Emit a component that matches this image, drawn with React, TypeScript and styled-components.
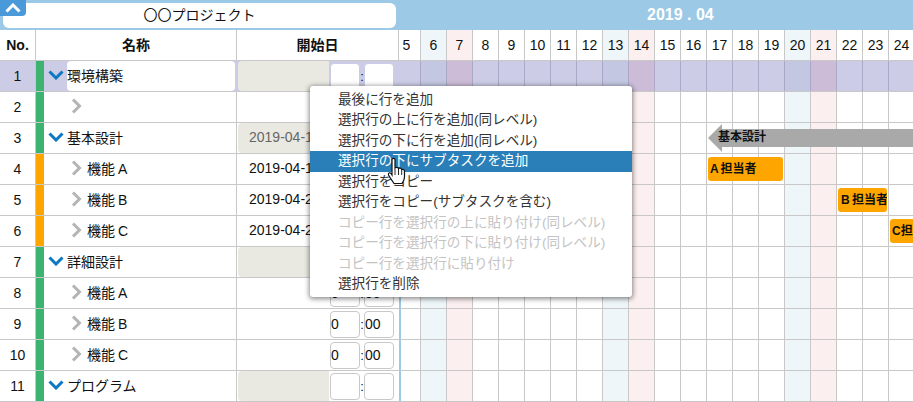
import React from "react";
import styled, { createGlobalStyle } from "styled-components";

const Global = createGlobalStyle`
  html, body { margin: 0; padding: 0; background: #fff; overflow: hidden; }
  body { font-family: "Liberation Sans", "Noto Sans CJK JP", sans-serif; font-size: 14px; color: #111; }
`;

const Page = styled.div`
  position: relative;
  width: 913px;
  height: 402px;
  overflow: hidden;
`;
const TopBar = styled.header`
  position: relative;
  display: flex;
  align-items: center;
  height: 30px;
  background: #9bc9e6;
`;
const CollapseButton = styled.button`
  position: absolute;
  left: 0;
  top: 0;
  display: flex;
  align-items: center;
  justify-content: center;
  width: 26px;
  height: 16px;
  padding: 0;
  border: 0;
  border-radius: 0 0 4px 0;
  background: #4a9ada;
`;
const ProjectName = styled.div`
  width: 393px;
  height: 25px;
  margin-left: 3px;
  border-radius: 6px;
  background: #fff;
  text-align: center;
  line-height: 25px;
  font-size: 14px;
`;
const MonthLabel = styled.div`
  margin-left: 251px;
  color: #fff;
  font-size: 16px;
  font-weight: bold;
  white-space: pre;
`;
const Row = styled.div<{ $selected?: boolean }>`
  display: flex;
  height: 30px;
  border-bottom: 1px solid #c8c8c8;
  background: ${(p) => (p.$selected ? "#cccce6" : "#fff")};
`;
const NoCell = styled.div<{ $head?: boolean }>`
  flex: none;
  display: flex;
  align-items: center;
  justify-content: center;
  width: 35px;
  border-right: 1px solid #c8c8c8;
  font-weight: ${(p) => (p.$head ? "bold" : "normal")};
`;
const NameHead = styled.div`
  flex: none;
  width: 200px;
  border-right: 1px solid #c8c8c8;
  text-align: center;
  line-height: 30px;
  font-weight: bold;
`;
const StartHead = styled.div`
  flex: none;
  width: 161px;
  margin-right: 2px;
  border-right: 1px solid #c8c8c8;
  text-align: center;
  line-height: 30px;
  font-weight: bold;
`;
const ColorBar = styled.div<{ $color: string }>`
  flex: none;
  width: 8px;
  background: ${(p) => p.$color};
`;
const NameCell = styled.div<{ $indent: number; $clear?: boolean }>`
  flex: none;
  display: flex;
  align-items: center;
  width: 193px;
  padding: 0 0 2px ${(p) => p.$indent}px;
  box-sizing: border-box;
  border-right: 1px solid ${(p) => (p.$clear ? "transparent" : "#c8c8c8")};
`;
const NameBox = styled.div`
  flex: 1;
  align-self: flex-start;
  height: 30px;
  margin: 0 1px 0 3px;
  border-radius: 4px;
  background: #fff;
  line-height: 30px;
`;
const Arrow = styled.svg`
  flex: none;
  display: block;
`;
const Label = styled.span<{ $gap: number }>`
  margin-left: ${(p) => p.$gap}px;
  white-space: pre;
  word-spacing: -1px;
`;
const DateCell = styled.div<{ $selected?: boolean }>`
  flex: none;
  display: flex;
  align-items: center;
  width: 164px;
  box-sizing: border-box;
  padding-left: 1px;
  border-right: 2px solid ${(p) => (p.$selected ? "transparent" : "#9bc9e6")};
`;
const DateBox = styled.div<{ $filled: boolean }>`
  flex: none;
  width: 91px;
  height: 100%;
  box-sizing: border-box;
  padding-left: 11px;
  border-radius: 4px 0 0 4px;
  background: ${(p) => (p.$filled ? "#e9e9e2" : "transparent")};
  color: ${(p) => (p.$filled ? "#666" : "#111")};
  line-height: 29px;
`;
const TimeGroup = styled.div`
  display: flex;
  margin-left: 1px;
`;
const TimeBox = styled.div<{ $selected?: boolean }>`
  flex: none;
  width: 30px;
  height: 27px;
  box-sizing: border-box;
  border: 1px solid ${(p) => (p.$selected ? "#cccce6" : "#c8c8c8")};
  border-radius: 4px;
  background: #fff;
  line-height: 25px;
  white-space: pre;
`;
const TimeSep = styled.span`
  flex: none;
  width: 4px;
  text-align: center;
  line-height: 27px;
  font-size: 13px;
`;
const Gantt = styled.div`
  position: relative;
  flex: none;
  display: flex;
  width: 512px;
  overflow: hidden;
`;
const DayCell = styled.div<{ $w: number; $pad: number; $bg: string; $line: string }>`
  position: relative;
  flex: none;
  width: ${(p) => p.$w}px;
  box-sizing: border-box;
  padding-right: ${(p) => p.$pad}px;
  border-right: 1px solid ${(p) => p.$line};
  background: ${(p) => p.$bg};
  text-align: center;
  line-height: 30px;
  font-size: 14px;
`;
const TaskBar = styled.div<{ $left: number; $width: number; $pad: number }>`
  position: absolute;
  z-index: 1;
  left: ${(p) => p.$left}px;
  top: 3px;
  width: ${(p) => p.$width}px;
  height: 24px;
  box-sizing: border-box;
  padding-left: ${(p) => p.$pad}px;
  border-radius: 3px;
  background: #ffa500;
  font-size: 12px;
  font-weight: bold;
  line-height: 24px;
  word-spacing: -1px;
  white-space: pre;
  overflow: hidden;
`;
const SummaryBar = styled.div`
  position: absolute;
  z-index: 1;
  left: 307px;
  top: 1px;
  display: flex;
  align-items: center;
  width: 230px;
  height: 28px;
`;
const SummaryBody = styled.div`
  flex: 1;
  height: 18px;
  margin-left: -5px;
  padding-left: 1px;
  background: #a9a9a9;
  font-size: 12px;
  font-weight: bold;
  line-height: 17px;
`;
const Menu = styled.div`
  position: absolute;
  z-index: 5;
  left: 310px;
  top: 86px;
  width: 322px;
  box-sizing: border-box;
  padding: 3.5px 0 2.5px;
  border-radius: 3px;
  background: #fff;
  box-shadow: 0 1px 5px 1px rgba(0, 0, 0, 0.45);
`;
const MenuItem = styled.div<{ $active?: boolean; $disabled?: boolean }>`
  height: 20.5px;
  padding-left: 28px;
  background: ${(p) => (p.$active ? "#2a7fb8" : "transparent")};
  color: ${(p) => (p.$active ? "#fff" : p.$disabled ? "#c4c4c4" : "#333")};
  font-size: 13.6px;
  line-height: 20px;
  white-space: pre;
`;
const Cursor = styled.svg`
  position: absolute;
  z-index: 6;
  left: 387px;
  top: 157px;
`;

const days = [5, 6, 7, 8, 9, 10, 11, 12, 13, 14, 15, 16, 17, 18, 19, 20, 21, 22, 23, 24, 25];
const isSat = (d: number) => d % 7 === 6;
const isSun = (d: number) => d % 7 === 0;
const dayWidth = (i: number) => (i === 0 ? 20 : 26);

const dayBg = (d: number, selected: boolean) => {
  if (selected) return isSat(d) ? "#c3c7e2" : isSun(d) ? "#ccbcd8" : "#cccce6";
  return isSat(d) ? "#eef6f9" : isSun(d) ? "#fcefef" : "#fff";
};

type RowData = {
  no: number;
  name: string;
  color: string;
  level: 0 | 1;
  date?: string;
  filled?: boolean;
  time?: boolean;
  empty?: boolean;
  selected?: boolean;
};

const green = "#3cb371";
const orange = "#ffa500";

const rows: RowData[] = [
  { no: 1, name: "環境構築", color: green, level: 0, filled: true, empty: true, selected: true },
  { no: 2, name: "", color: green, level: 1 },
  { no: 3, name: "基本設計", color: green, level: 0, filled: true, date: "2019-04-1" },
  { no: 4, name: "機能 A", color: orange, level: 1, date: "2019-04-1" },
  { no: 5, name: "機能 B", color: orange, level: 1, date: "2019-04-2" },
  { no: 6, name: "機能 C", color: orange, level: 1, date: "2019-04-2" },
  { no: 7, name: "詳細設計", color: green, level: 0, filled: true },
  { no: 8, name: "機能 A", color: green, level: 1, time: true },
  { no: 9, name: "機能 B", color: green, level: 1, time: true },
  { no: 10, name: "機能 C", color: green, level: 1, time: true },
  { no: 11, name: "プログラム", color: green, level: 0, filled: true, empty: true },
];

const menuItems: { text: string; active?: boolean; disabled?: boolean }[] = [
  { text: "最後に行を追加" },
  { text: "選択行の上に行を追加(同レベル)" },
  { text: "選択行の下に行を追加(同レベル)" },
  { text: "選択行の下にサブタスクを追加", active: true },
  { text: "選択行をコピー" },
  { text: "選択行をコピー(サブタスクを含む)" },
  { text: "コピー行を選択行の上に貼り付け(同レベル)", disabled: true },
  { text: "コピー行を選択行の下に貼り付け(同レベル)", disabled: true },
  { text: "コピー行を選択行に貼り付け", disabled: true },
  { text: "選択行を削除" },
];

const ChevronDown = () => (
  <Arrow width="16" height="10" viewBox="0 0 16 10">
    <path d="M1.5 1.5 L8 8 L14.5 1.5" fill="none" stroke="#0b78c2" strokeWidth="3" />
  </Arrow>
);
const ChevronRight = () => (
  <Arrow width="11" height="16" viewBox="0 0 11 16">
    <path d="M2 1.5 L8.5 8 L2 14.5" fill="none" stroke="#b4b4b4" strokeWidth="3" />
  </Arrow>
);

const Summary = () => (
  <SummaryBar>
    <Arrow width="14" height="28" viewBox="0 0 14 28">
      <path d="M14 0 V28 L0 14 Z" fill="#a9a9a9" />
    </Arrow>
    <SummaryBody>基本設計</SummaryBody>
  </SummaryBar>
);

const bars: Record<number, React.ReactNode> = {
  3: <Summary />,
  4: <TaskBar $left={307} $width={75} $pad={2}>A 担当者</TaskBar>,
  5: <TaskBar $left={437} $width={49} $pad={3}>B 担当者</TaskBar>,
  6: <TaskBar $left={489} $width={40} $pad={2}>C担当者</TaskBar>,
};

const GanttCells = ({ r }: { r: RowData }) => (
  <Gantt>
    {bars[r.no]}
    {days.map((d, i) => (
      <DayCell
        key={d}
        $w={dayWidth(i)}
        $pad={0}
        $bg={dayBg(d, !!r.selected)}
        $line={r.selected ? "#aaa8c6" : "#c8c8c8"}
      />
    ))}
  </Gantt>
);

const DataRow = ({ r }: { r: RowData }) => (
  <Row $selected={r.selected}>
    <NoCell>{r.no}</NoCell>
    <ColorBar $color={r.color} />
    {r.level === 0 ? (
      <NameCell $indent={4} $clear={r.selected}>
        <ChevronDown />
        {r.selected ? <NameBox>{r.name}</NameBox> : <Label $gap={3}>{r.name}</Label>}
      </NameCell>
    ) : (
      <NameCell $indent={27} $clear={r.selected}>
        <ChevronRight />
        <Label $gap={5}>{r.name}</Label>
      </NameCell>
    )}
    <DateCell $selected={r.selected}>
      <DateBox $filled={!!r.filled}>{r.date}</DateBox>
      {(r.time || r.empty) && (
        <TimeGroup>
          <TimeBox $selected={r.selected}>{r.time ? "0" : ""}</TimeBox>
          <TimeSep>:</TimeSep>
          <TimeBox $selected={r.selected}>{r.time ? "00" : ""}</TimeBox>
        </TimeGroup>
      )}
    </DateCell>
    <GanttCells r={r} />
  </Row>
);

export default function App() {
  return (
    <Page>
      <Global />
      <TopBar>
        <CollapseButton aria-label="collapse">
          <Arrow width="16" height="10" viewBox="0 0 16 10">
            <path d="M1.5 8.5 L8 2 L14.5 8.5" fill="none" stroke="#fff" strokeWidth="3" />
          </Arrow>
        </CollapseButton>
        <ProjectName>〇〇プロジェクト</ProjectName>
        <MonthLabel>2019 . 04</MonthLabel>
      </TopBar>
      <Row>
        <NoCell $head>No.</NoCell>
        <NameHead>名称</NameHead>
        <StartHead>開始日</StartHead>
        <Gantt>
          {days.map((d, i) => (
            <DayCell key={d} $w={dayWidth(i)} $pad={i === 0 ? 8 : 0} $bg={dayBg(d, false)} $line="#c8c8c8">
              {d}
            </DayCell>
          ))}
        </Gantt>
      </Row>
      {rows.map((r) => (
        <DataRow key={r.no} r={r} />
      ))}
      <Menu>
        {menuItems.map((m) => (
          <MenuItem key={m.text} $active={m.active} $disabled={m.disabled}>
            {m.text}
          </MenuItem>
        ))}
      </Menu>
      <Cursor width="19" height="28" viewBox="0 0 19 28">
        <path
          d="M5 2.5 C5 1 8 1 8 2.5 V11 C9 10 11 10 11.5 11.5 C12.5 10.7 14.3 11 14.7 12.5 C15.8 12 17.5 12.5 17.5 14.5 V20 C17.5 23 16 25 15 26.5 H7 C5.5 24 3 21 1.5 18 C1 16 2.5 15 4 16.5 L5 18 Z"
          fill="#fff"
          stroke="#111"
          strokeWidth="1.2"
        />
        <path d="M8 12 V18 M11.5 12 V18 M14.7 13 V18" stroke="#111" strokeWidth="0.9" />
      </Cursor>
    </Page>
  );
}
